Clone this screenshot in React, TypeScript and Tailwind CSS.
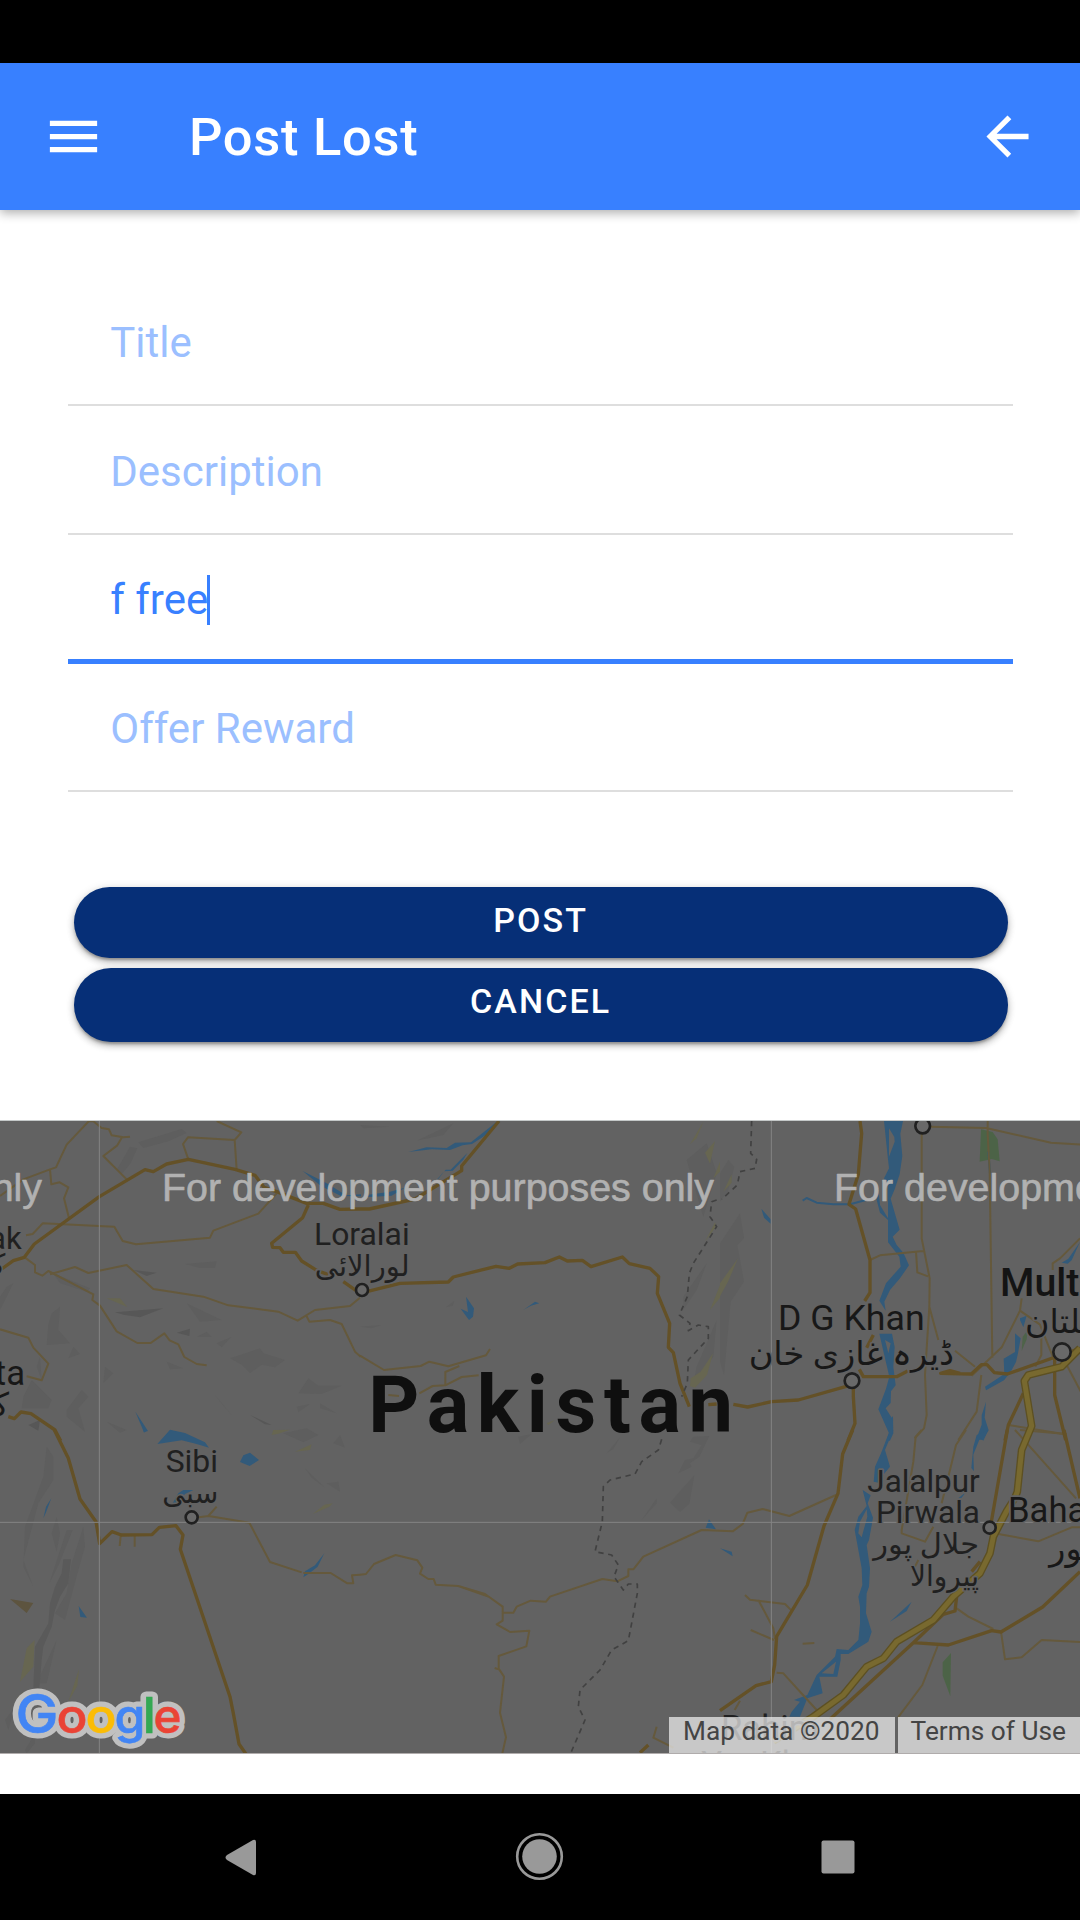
import React from 'react';
import { IoMdArrowBack, IoMdMenu } from 'react-icons/io';

function Field({ label, active = false }: { label: string; active?: boolean }) {
  return (
    <div
      className={
        active
          ? 'flex h-[128.625px] items-center border-b-[5px] border-[#3880ff] pt-[6px] pl-[42px] text-[#3880ff]'
          : 'flex h-[128.625px] items-center border-b-[2px] border-[#dedede] pt-[4px] pl-[42px] text-[#9bbfff]'
      }
    >
      <span className="text-[42px] leading-[50px]">{label}</span>
      {active && <span className="-ml-px h-[50px] w-[3px] bg-[#3880ff]" />}
    </div>
  );
}

type LabelProps = {
  x: number;
  y: number;
  size: number;
  children: string;
  width?: number;
  anchor?: 'start' | 'middle' | 'end';
  weight?: number;
  fill?: string;
};

function MapLabel({ x, y, size, children, width, anchor = 'start', weight = 400, fill = '#202020' }: LabelProps) {
  return (
    <text
      x={x}
      y={y}
      fontSize={size}
      fontWeight={weight}
      textAnchor={anchor}
      fill={fill}
      stroke="#626262"
      strokeWidth={10}
      paintOrder="stroke"
      strokeLinejoin="round"
      textLength={width}
      lengthAdjust="spacingAndGlyphs"
    >
      {children}
    </text>
  );
}

const WATER = '#325a7a';
const MINOR = '#65593c';
const MAJOR = '#645127';
const MOTORWAY =
  'M3240 682L3185 737 3085 762 3073 780 3095 915 3065 987 3052 1112 3045 1130 3020 1170 2980 1247 2970 1297 2940 1357 2860 1427 2800 1497 2690 1562 2650 1612 2600 1637 2530 1722 2440 1787 2320 1860';

function MapDrawing() {
  return (
    <svg
      viewBox="0 0 3240 1896"
      className="block h-[632px] w-full font-['Roboto','DejaVu_Sans',sans-serif]"
      fill="none"
      strokeLinejoin="round"
    >
      <rect width="3240" height="1896" fill="#626262" />

      {/* terrain shading */}
      <g fill="#5e5e5e">
        <g transform="translate(0 -33)">
          <path d="M415 97l130-40 15 12-55 25-75 20zM350 180l40-70 22 5-20 45-25 30zM555 462l95-8-5 20-45 0zM155 610l25-20-5 70 35 40-70 5 5-60zM205 745l15-35 20 22zM160 490l110 45-10 10-80-25zM690 745l90-30 10 15 65 20-30 22-40-8-35 25-25-25zM895 850l30-45 30 22 70 0-60 25zM645 855l50 60-35-40zM890 890l40-8-35 25zM960 880l50 30-50-15zM200 900l45-60 20 20-30 35 20 70-55-45zM70 860l25-50 60 60-10 25-80 0zM310 820l5-50 25 20zM500 755l50 20-40 3zM650 700l45-20-30 32zM590 680l30-15 15 15zM560 580l105 50-65 5zM110 770l10-30 5 70zM320 935l60 25-20 8zM0 600l40-80-20 10-20 30z" />
          <path fill="#575757" d="M345 607l145-12-70 27-50-8zM530 668l40-12-2 22zM750 915l65 30-20-2zM85 945l35-15-5 32zM400 480l70 8-30 10z" />
        </g>
        <g transform="translate(1080 -33)">
          <path d="M0 45l90 5-80 5zM170 92l110-52-30 35zM980 150l60-50 30 90-40 130zM970 560l70-100-30 80-40 60zM258 592l25-20-5 15zM0 650l65-5-30 10zM1010 770l60-140-10 110-60 80z" />
        </g>
        <g transform="translate(2160 -33)">
          <path d="M0 190l25-40 18 20-20 75-23 30zM0 400l60-90 12 75-20 20 20 110-40 60-20 220-12-40z" />
        </g>
        <g transform="translate(0 927)">
          <path d="M140 50l20 30 0 70-45 70-45 170 30 80-30-60 5-120 55-150zM155 310l15-50 10 50-10 55zM200 300l18 0-40 100-30 60zM215 400l35-110 5 60-20 70-40 150-30-20 35-60zM110 760l60-130-30 130zM200 750l35-105-20 60zM15 870l30-40-20 70zM75 960l30-50 0 30-25 30zM850 10l70-15 35 20-45 22zM1000 40l20-25 15 38zM915 115l60 58-40-30zM980 160l35-5 5 30z" />
          <path fill="#5a5a5a" d="M190 388L213 388 205 460 180 500 165 540 155 590 130 650 125 690 118 775 100 775 105 650 145 580 150 520 165 470 185 430z" />
        </g>
        <g transform="translate(1080 927)">
          <path d="M475 20l40-8-35 30zM740 70l40-48-20 35zM955 130L975 90 1000 85 1025 45 990 35 1000 20 1048 18 1018 80 990 100 995 110zM930 218l35-40 38-42-15 85-28 25zM845 270l45-65 0 15z" />
        </g>
      </g>

      {/* vegetation */}
      <g fill="#676651">
        <path transform="translate(0 -33)" d="M320 565l40 0 22 26zM815 975l5-15 50-1-35 12z" />
        <path transform="translate(1080 -33)" d="M990 103l40-68-20 50zM1035 128l30-35-15 68zM1060 205l20-50 0 30zM1035 395l30-58 4 12zM1050 600l30-75 0 38zM992 805l30-20 37-55-18 65-36 38-15-4zM560 940l25-10-20 15z" />
        <path transform="translate(2160 -33)" d="M10 245l25-52 0 25zM0 520l54-75-30 70-24 44z" />
        <path transform="translate(0 927)" d="M885 65l50-22-5 17zM938 252l35-28 25-4-10 10zM60 755l20-100 24-25-4 80zM205 815l32-98-5 50zM50 805l20-20-5 20z" />
      </g>
      <path d="M30 1434l70 12-20 30z" fill="#5d543f" />
      <g fill="#46643f">
        <path d="M2943 25l35 8 15 22 6 66-24-7-36 8zM2828 1624l25-28-2 130-23-62z" opacity=".75" />
        <path d="M3065 690l15-35 3-28-15 20z" opacity=".7" />
      </g>

      {/* rivers and lakes */}
      <g fill={WATER}>
        <path transform="translate(0 -33)" d="M908 183l75 38 55 35 45-3 0 6-60-1-60-30zM406 905l38 58-12 4z" />
        <path transform="translate(0 927)" d="M472 42l38-43 45 10 60 28 12 16-40-12-42-10zM720 96l10-20 20-8 27 22-28 18zM515 225l20-35 15-10 30 0-25 12-25 30zM130 265l8-35 16-25-17 45zM236 528l25 35-20-2zM910 442l5-18 30-18 28-36-20 40-28 22zM430 0l10 0-8 8z" />
        <path transform="translate(1080 -33)" d="M145 126l55-14 60 2 25-16 48-1 80-64 8 0-35 37-50 32-28 4-38 14-55-2zM232 207l25-28 15 0 50-50-12 20-32 33-25 2-20 25zM318 560l24 35-3 25-12 10-25-34 22 10zM490 600l35-25 13 5-25 7zM20 255l70-10 45-12-40 24-70 4z" />
        <path
          fillRule="evenodd"
          transform="translate(2160 -33)"
          d="M492 33L549 33 541 71 547 138 539 193 524 238 512 266 525 311 539 359 518 380 530 405 550 428 567 466 540 505 510 540 493 575 497 602 478 572 498 520 542 470 538 440 504 397 504 330 480 308 470 270 474 225 480 285 504 325 504 230 492 205 507 175 502 130zM507 55L507 140 524 95 523 81zM478 671L516 671 524 711 520 771 527 826 513 844 512 879 497 895 515 923 519 918 520 970 510 992 499 992 507 970 475 898 498 836 508 800 495 745zM495 690L505 730 512 700zM124 296l28 32 0 13-20-18zM885 670l17 15-8 45-6 26-16 30-20 25-54 30-3-11 58-38-2-46 34-20zM900 625l20-8-10 35-10-22zM1025 458l20-12 35-50-25 55-12 10zM798 875L794 923 806 961 788 989 768 989 785 944 785 916z"
        />
        <path
          fillRule="evenodd"
          transform="translate(2160 927)"
          d="M510 0L520 0 495 60 510 110 485 140 482 160 461 155 465 110 483 70zM428 180L452 196 443 220 459 263 447 330 440 345 450 415 447 470 440 490 438 550 455 605 445 635 385 672 362 672 362 690 352 740 298 740 308 790 262 805 240 860 208 860 215 845 240 815 222 810 262 795 290 735 345 680 350 657 385 660 415 630 420 580 420 530 415 500 427 465 425 415 415 360 404 300 415 260 440 228zM440 238L420 275 415 310 425 322 442 260zM348 695L305 730 340 732zM510 575l65-60-15 28zM770 15l35-15-15 32-10-8-20 50 2 50-8-10 6-64zM0 355l35 10 3 14zM715 205l22-18-12 16z"
        />
        <path transform="translate(1080 927)" d="M1047 268L1068 298 1037 293z" />
      </g>
      <path transform="translate(2160 -33)" d="M248 272l12-8 30 14 50 5 50 0 45-12M805 125l5 65" stroke={WATER} strokeWidth="6" />

      {/* district roads */}
      <g stroke={MINOR} strokeWidth="6">
        <path transform="translate(0 -33)" d="M0 258l70-50 80-30 18-6 32-68 66-70 14 0 25 20 22 4 8 18 35 6 20-2M366 82l-14 24-42 32 70 70M150 178l4 45 25-6 26 15-13 33 15 60M78 376L98 372 128 340 343 350 368 393 408 403 630 383 640 362 775 311 830 250M650 33l74 34-20 23-140-8-15 20 16 46M704 90l6 90M75 443L105 465 105 487 127 497 145 483 280 553 277 570 300 587 350 664 412 699 452 699 493 670 509 691 535 703 553 741 590 762 620 766M150 493L225 471 265 489 380 465 460 537 610 560 685 586 835 605 893 632 945 600 1050 588 1080 563M918 615L928 635 990 630 1025 642 1065 725 1082 740M0 658l85 25 15 30 45 48-20 50-45-12" />
        <path transform="translate(1080 -33)" d="M0 737L72 780 182 768 208 755 265 769 378 736 390 717M298 768L256 786 256 826 305 801 356 796M256 826l-38 2-40 22M85 855l32 3" />
        <path transform="translate(2160 -33)" d="M630 50l168 4 195 44 90 6M803 33l0 40 6 110 8 560M605 70l0 315 24 120-1 85 27 100M628 590l-13 205 5 120-8 40-28 30M450 450l30-14 130-13M588 425l4 62 32 12M905 565l-5 37-55 110-90 85M705 722l60 48M784 795l-14 110-55 85M1080 385l-60 60-22 15 0 20M900 602l60 42 40 100M964 680l0 55-18 35M1035 755l50 95M865 945l165 27" />
        <path transform="translate(0 927)" d="M596 262l30-4 122 20 62 118 95 31M910 429l82 0 50 31 18 0-4-24 25-2M625 258l25-28M362 318l-3 30M404 318l0 32" />
        <path transform="translate(1080 927)" d="M0 434L18 432 42 402 107 375 172 391 187 413 180 431 205 447 221 447 227 464 295 468 375 492 428 530 428 572 410 583 450 606 508 602 499 649 416 678 416 716 432 740 420 848 438 922 427 970M404 714L416 718M428 548L460 548 470 530 512 512 558 515 570 500 727 447 772 454 805 438 805 418 820 418 850 380 1025 300 1080 302M890 890L880 923 940 953M295 468L385 500" />
        <path transform="translate(2160 927)" d="M0 302L38 304 68 282 82 248 128 237 208 258 348 195M605 0L587 20 580 95 562 200 545 300 545 310 615 335 640 290M738 0L708 45 690 120 665 220M595 390L585 410M885 0L1068 205M900 0L1040 12M835 312L955 334 1055 292 1085 292M75 495l15 14 105 13 20 20M115 510l45 85 5 32M92 600l70 30M170 728l20 2 100 110M248 641l35-2M60 812l-16 28M710 535l35 25 75 37M843 605l12 83 50-6 60-52 115 6M653 648L607 765 527 872" />
      </g>

      {/* trunk roads */}
      <g stroke={MAJOR} strokeWidth="10">
        <path transform="translate(0 -33)" d="M5 477L40 452 73 442 103 402 298 260 435 179 460 185 500 162 565 148 705 178 765 196 792 232 830 245 920 280 970 280 1020 298 1080 297M925 285L908 323 815 400 818 412 840 413 850 427 886 427 905 453 950 481 985 494M1030 515l50 35M25 920L43 926 63 906 93 911 165 960 182 992" />
        <path transform="translate(1080 -33)" d="M0 297L28 297 165 267 305 182 305 168 417 33M20 545L120 520 265 516 280 501 408 469 448 475 473 462 555 458 598 441 622 453 667 451 693 470 787 441 808 461 870 475 896 500 892 550 929 640 925 712 940 728 960 820 988 890M1045 884l25-2" />
        <path transform="translate(2160 -33)" d="M420 33L425 70 415 193 387 283 407 297 450 450 450 548 434 573M1080 715L862 792 823 788 801 764 784 764 754 792 662 790 690 782 720 790M563 783L530 800 430 800 418 778M460 675l-20 38M40 883L83 891 155 875 235 870 400 823 400 860 405 940 384 992M910 850L865 945 855 992M1004 745L1004 855 1037 990" />
        <path transform="translate(0 927)" d="M163 0L205 85 240 207 288 275 299 341 336 305 364 315 456 314 478 292 528 287 549 315 541 358 690 800 700 850 717 942 738 972" />
        <path transform="translate(2160 927)" d="M398 0L368 72 354 190 312 288 262 465 170 619 164 705 154 755 108 767 0 842M862 0l-48 275M1032 0l48 205M1080 425L968 531 843 606 815 602 685 645 580 638M710 500L705 543 670 553 580 638 330 868M-240 968L-215 945M780 395L755 425" />
      </g>

      {/* motorway */}
      <path d={MOTORWAY} stroke="#5d5022" strokeWidth="23" />
      <path d={MOTORWAY} stroke="#78692f" strokeWidth="15" />

      {/* province border */}
      <g stroke="#414141" strokeWidth="5" strokeDasharray="16 14">
        <path transform="translate(2160 -33)" d="M95 33L92 130 110 148 105 175 60 185 52 225 5 268" />
        <path transform="translate(1080 -33)" d="M1070 270L1055 275 1050 320 1070 350 1000 460 988 490 982 560 958 615 990 640 985 662 1015 645 1045 650 1045 685 985 750 982 820 965 860" />
        <path transform="translate(1080 927)" d="M905 28L895 60 845 95 825 132 750 150 730 170 727 275 705 365 755 375 775 405 762 440 790 480 805 462 832 462 832 490 805 632 755 660 720 720 660 780 655 830 675 870 632 970" />
      </g>

      {/* tile seams */}
      <path d="M298 0V1896M2314 0V1896M0 1204H3240" stroke="#858585" strokeWidth="3" />

      {/* towns */}
      <g fill="#696969" stroke="#202020" strokeWidth="8">
        <circle cx="1086" cy="507" r="18" />
        <circle cx="575" cy="1189" r="18" />
        <circle cx="2969" cy="1220" r="18" />
        <circle cx="2768" cy="15" r="22" />
        <circle cx="2556" cy="779" r="22" />
        <circle cx="3186" cy="693" r="26" />
      </g>

      <MapLabel x={65} y={384} size={93} anchor="end">Kuchlak</MapLabel>
      <MapLabel x={16} y={460} size={84} anchor="end">کچلاک</MapLabel>
      <MapLabel x={75} y={793} size={104} anchor="end" fill="#181818">Quetta</MapLabel>
      <MapLabel x={27} y={885} size={98} anchor="end" fill="#181818">کوئٹہ</MapLabel>
      <MapLabel x={942} y={372} size={93} width={287}>Loralai</MapLabel>
      <MapLabel x={944} y={465} size={88} width={285}>لورالائی</MapLabel>
      <MapLabel x={497} y={1053} size={93} width={157}>Sibi</MapLabel>
      <MapLabel x={487} y={1145} size={88} width={168}>سبی</MapLabel>
      <MapLabel x={2334} y={627} size={104} width={440} fill="#181818">D G Khan</MapLabel>
      <MapLabel x={2246} y={732} size={98} width={616} fill="#181818">ڈیرہ غازی خان</MapLabel>
      <MapLabel x={3000} y={525} size={118} weight={500} fill="#141414">Multan</MapLabel>
      <MapLabel x={3075} y={636} size={100} fill="#181818">ملتان</MapLabel>
      <MapLabel x={2602} y={1112} size={93} width={337}>Jalalpur</MapLabel>
      <MapLabel x={2628} y={1206} size={93} width={312}>Pirwala</MapLabel>
      <MapLabel x={2620} y={1300} size={88} width={317}>جلال پور</MapLabel>
      <MapLabel x={2730} y={1394} size={88} width={207}>پیروالا</MapLabel>
      <MapLabel x={3024} y={1202} size={104} fill="#181818">Bahawalpur</MapLabel>
      <MapLabel x={3148} y={1318} size={100} fill="#181818">بہاولپور</MapLabel>
      <MapLabel x={2310} y={1858} size={104} anchor="middle">Rahim</MapLabel>
      <MapLabel x={2310} y={1964} size={104} anchor="middle">Yar Khan</MapLabel>
      <text
        x="1105"
        y="933"
        fontSize="238"
        fontWeight="700"
        fill="#0f0f0f"
        textLength="1094"
        lengthAdjust="spacing"
      >
        Pakistan
      </text>

      <g fill="#b1b1b1" fontFamily="'Liberation Sans', sans-serif" fontSize="118" stroke="#b1b1b1" strokeWidth="2">
        <text x="126" y="240" textAnchor="end">For development purposes only</text>
        <text x="486" y="240" textLength="1656">For development purposes only</text>
        <text x="2502" y="240" textLength="1656">For development purposes only</text>
      </g>
    </svg>
  );
}

function GoogleLogo() {
  const letters = [
    { c: 'G', x: 15.5, s: 53, f: '#4285f4', w: 43 },
    { c: 'o', x: 56.5, s: 48, f: '#ea4335', w: 31 },
    { c: 'o', x: 85.5, s: 48, f: '#fbbc05', w: 31 },
    { c: 'g', x: 114.5, s: 48, f: '#4285f4', w: 31 },
    { c: 'l', x: 142.5, s: 50, f: '#34a853', w: 13.5 },
    { c: 'e', x: 153.5, s: 48, f: '#ea4335', w: 28 },
  ];
  return (
    <svg
      width="190"
      height="72"
      className="absolute bottom-0 left-0"
      fontFamily="Inter, sans-serif"
      fontWeight="500"
    >
      {letters.map((l, i) => (
        <text
          key={i}
          x={l.x}
          y="51"
          fontSize={l.s}
          textLength={l.w}
          lengthAdjust="spacingAndGlyphs"
          stroke="#c0c0c0"
          strokeWidth="11"
          strokeLinejoin="round"
          fill="#c0c0c0"
          aria-hidden="true"
        >
          {l.c}
        </text>
      ))}
      {letters.map((l, i) => (
        <text
          key={i}
          x={l.x}
          y="51"
          fontSize={l.s}
          fill={l.f}
          stroke={l.f}
          strokeWidth="0.6"
          textLength={l.w}
          lengthAdjust="spacingAndGlyphs"
        >
          {l.c}
        </text>
      ))}
    </svg>
  );
}

const buttonStyle =
  'block w-full rounded-full bg-[#062f77] text-center text-[34px] font-medium tracking-[2.1px] text-white shadow-[0_3px_3px_-1px_rgba(0,0,0,0.28),0_4px_7px_rgba(0,0,0,0.22),0_1px_10px_rgba(0,0,0,0.12)]';

export default function App() {
  return (
    <div className="flex h-[1920px] w-[1080px] flex-col overflow-hidden bg-white font-['Roboto',sans-serif]">
      <div className="h-[63px] shrink-0 bg-black" />
      <header className="z-10 flex h-[147px] shrink-0 items-center bg-[#3880ff] pr-[41px] pl-[42px] text-white shadow-[0_3px_10px_rgba(0,0,0,0.32)]">
        <IoMdMenu className="size-[63px]" />
        <h1 className="ml-[84px] flex-1 text-[52.5px] leading-[64px] font-medium tracking-[0.7px]">Post Lost</h1>
        <IoMdArrowBack className="size-[63px]" />
      </header>

      <main className="flex h-[910px] shrink-0 flex-col pr-[67px] pl-[68.25px]">
        <div className="mt-[67.75px]">
          <Field label="Title" />
          <Field label="Description" />
          <Field label="f free" active />
          <Field label="Offer Reward" />
        </div>
        <div className="mt-[94.75px] flex flex-col gap-[10px] px-[5.25px]">
          <button className={buttonStyle + ' h-[71px] pb-[5px]'}>POST</button>
          <button className={buttonStyle + ' h-[74px] pb-[8px]'}>CANCEL</button>
        </div>
      </main>

      <section className="relative h-[634px] shrink-0 overflow-hidden border-t border-[#c4c8c8] bg-[#626262]">
        <MapDrawing />
        <GoogleLogo />
        <div className="absolute right-0 bottom-0 flex h-[37px] text-[26.25px] leading-[29px] text-[#444]">
          <span className="w-[226px] bg-[#f4f4f4]/70 pl-[14px] whitespace-nowrap">Map data ©2020</span>
          <span className="w-[3px] bg-[#626262]" />
          <span className="w-[182px] bg-[#f4f4f4]/70 pl-[12.5px] whitespace-nowrap">Terms of Use</span>
        </div>
        <div className="absolute inset-x-0 bottom-0 h-px bg-[#b0acac]" />
      </section>

      <div className="h-[40px] shrink-0" />
      <nav className="h-[126px] shrink-0 bg-black">
        <svg width="1080" height="126" fill="#999">
          <path d="M227 61L253 46q3-1 3 2v31q0 3-3 2L227 66q-3-2.500 0-5z" />
          <circle cx="539.500" cy="62.500" r="17.300" />
          <circle cx="539.500" cy="62.500" r="22.300" fill="none" stroke="#999" strokeWidth="2.600" />
          <rect x="821.500" y="46.500" width="33" height="33" rx="2" />
        </svg>
      </nav>
    </div>
  );
}
